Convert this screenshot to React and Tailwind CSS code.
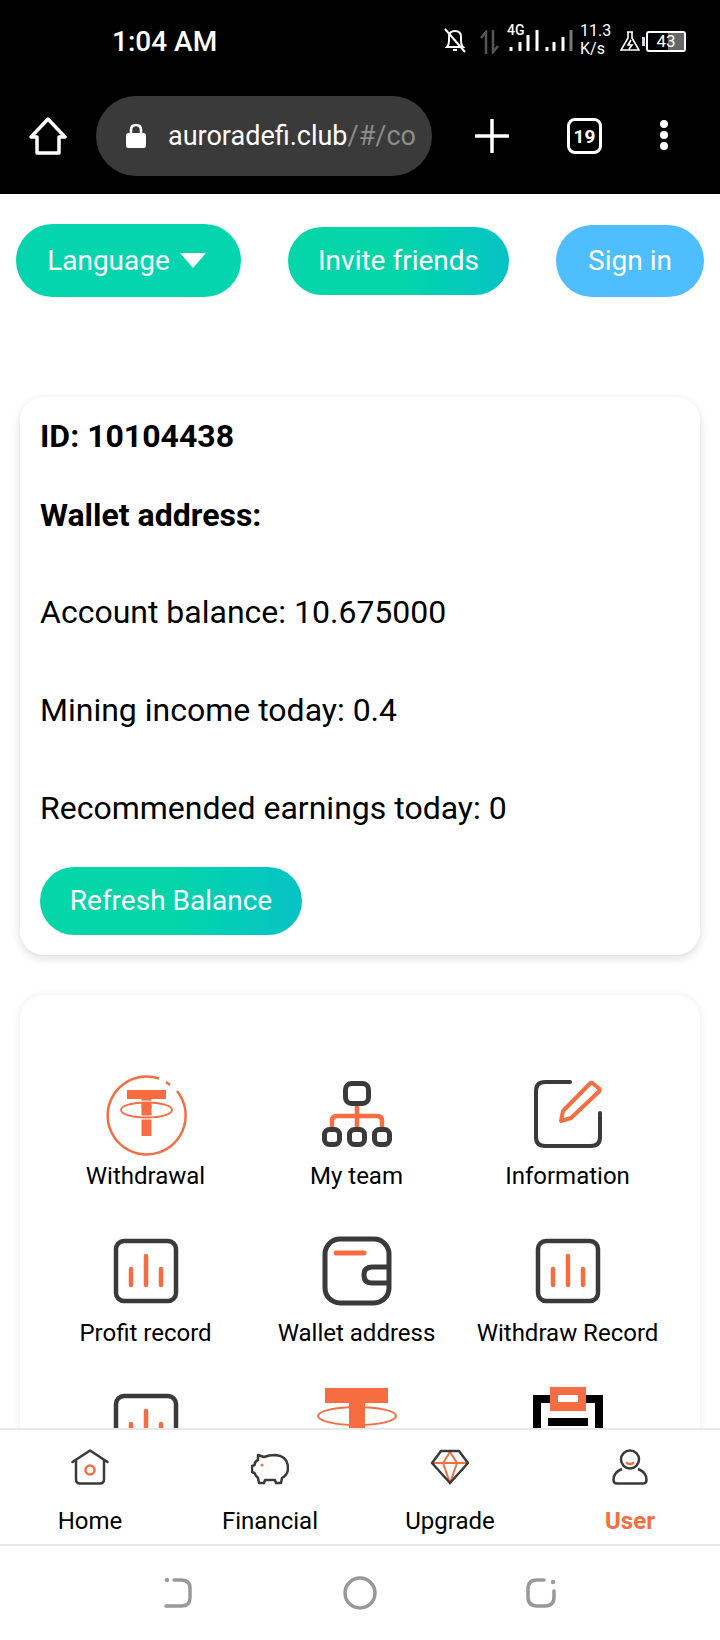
import React from "react";

const ORANGE = "#f56d40";
const DARK = "#3a3a3a";

function WithdrawalIcon() {
  return (
    <svg width="84" height="84" viewBox="0 0 84 84">
      <path d="M55 6.500A39 39 0 1 0 73 19" fill="none" stroke={ORANGE} strokeWidth="2.500" />
      <path d="M62 10l4 3" fill="none" stroke={ORANGE} strokeWidth="2.500" />
      <path d="M23 18H62V27H47.500V64H37.500V27H23Z" fill={ORANGE} />
      <ellipse cx="42.500" cy="38" rx="25.500" ry="7.500" fill="none" stroke="#fff" strokeWidth="4" />
      <ellipse cx="42.500" cy="38" rx="25.500" ry="7.500" fill="none" stroke={ORANGE} strokeWidth="1.800" />
      <path d="M37.500 31H47.500V36H37.500Z" fill={ORANGE} />
    </svg>
  );
}

function TeamIcon() {
  return (
    <svg width="72" height="68" viewBox="0 0 72 68">
      <path d="M36 26V47M11 47V41Q11 36 16 36H56Q61 36 61 41V47" fill="none" stroke={ORANGE} strokeWidth="4.500" />
      <rect x="24.500" y="3.500" width="23" height="20" rx="6" fill="none" stroke={DARK} strokeWidth="5" />
      <rect x="3.500" y="49.500" width="15" height="15" rx="5" fill="none" stroke={DARK} strokeWidth="5" />
      <rect x="28.500" y="49.500" width="15" height="15" rx="5" fill="none" stroke={DARK} strokeWidth="5" />
      <rect x="53.500" y="49.500" width="15" height="15" rx="5" fill="none" stroke={DARK} strokeWidth="5" />
    </svg>
  );
}

function InfoIcon() {
  return (
    <svg width="72" height="72" viewBox="0 0 72 72">
      <path d="M38 4H13Q4 4 4 13V59Q4 68 13 68H59Q68 68 68 59V35" fill="none" stroke={DARK} strokeWidth="4" strokeLinecap="round" />
      <path d="M29 43L31 33L58 5.500Q59.500 4 61 5.500L67 10.500Q68.500 12 67 13.500L39 40Z" fill="none" stroke={ORANGE} strokeWidth="4" strokeLinejoin="round" />
    </svg>
  );
}

function BarsIcon() {
  return (
    <svg width="66" height="66" viewBox="0 0 66 66">
      <rect x="3" y="3" width="60" height="60" rx="8" fill="none" stroke={DARK} strokeWidth="4.500" />
      <path d="M18 31V47M33 18V47M48 31V47" fill="none" stroke={ORANGE} strokeWidth="4.500" strokeLinecap="round" />
    </svg>
  );
}

function WalletIcon() {
  return (
    <svg width="72" height="70" viewBox="0 0 72 70">
      <rect x="4" y="3" width="64" height="64" rx="15" fill="none" stroke={DARK} strokeWidth="5" />
      <path d="M15 17H43" fill="none" stroke={ORANGE} strokeWidth="5" strokeLinecap="round" />
      <path d="M68 31H51Q43 31 43 39Q43 47 51 47H68" fill="none" stroke={DARK} strokeWidth="5" />
    </svg>
  );
}

function TetherIcon() {
  return (
    <svg width="84" height="80" viewBox="0 0 84 80">
      <path d="M10 2H73V17H50V80H34V17H10Z" fill={ORANGE} />
      <ellipse cx="42" cy="30" rx="39" ry="9" fill="none" stroke={ORANGE} strokeWidth="2" />
    </svg>
  );
}

function PrinterIcon() {
  return (
    <svg width="72" height="80" viewBox="0 0 72 80">
      <path d="M20 13H5V78H67V13H52" fill="none" stroke="#000" strokeWidth="8" />
      <rect x="18" y="1" width="36" height="24" fill={ORANGE} />
      <rect x="26" y="9" width="20" height="7" fill="#fff" />
      <rect x="16" y="32" width="40" height="8" fill="#000" />
    </svg>
  );
}

const items = [
  { id: "withdrawal", label: "Withdrawal", icon: <WithdrawalIcon /> },
  { id: "team", label: "My team", icon: <TeamIcon /> },
  { id: "info", label: "Information", icon: <InfoIcon /> },
  { id: "profit", label: "Profit record", icon: <BarsIcon /> },
  { id: "wallet", label: "Wallet address", icon: <WalletIcon /> },
  { id: "record", label: "Withdraw Record", icon: <BarsIcon /> },
  // last row runs under the tab bar, labels are out of view
  { id: "bars", icon: <BarsIcon /> },
  { id: "tether", icon: <TetherIcon /> },
  { id: "printer", icon: <PrinterIcon /> },
];

const tabs = [
  {
    label: "Home",
    icon: (
      <svg width="38" height="36" viewBox="0 0 38 36">
        <path d="M1.500 13L19 1.500L36.500 13M5 11V30Q5 34.500 9 34.500H29Q33 34.500 33 30V11" fill="none" stroke={DARK} strokeWidth="2.500" strokeLinecap="round" strokeLinejoin="round" />
        <circle cx="19" cy="21" r="4.500" fill="none" stroke={ORANGE} strokeWidth="2.500" />
      </svg>
    ),
  },
  {
    label: "Financial",
    icon: (
      <svg width="38" height="32" viewBox="0 0 38 32">
        <path d="M7 2L13 4Q18 2 24 2Q37 3 37 15Q37 22 31 25L30 30H25L24 27H14L13 30H8L7 25Q4 22 3.500 20L1 19V13L3.500 12Q4 8 7 7Z" fill="none" stroke={DARK} strokeWidth="2.500" strokeLinejoin="round" />
        <circle cx="11" cy="12" r="1.500" fill={ORANGE} />
      </svg>
    ),
  },
  {
    label: "Upgrade",
    icon: (
      <svg width="40" height="36" viewBox="0 0 40 36">
        <path d="M2 14H38M13 14L20 3L27 14L20 34L13 14Z" fill="none" stroke={ORANGE} strokeWidth="2" />
        <path d="M11 2H29L38 14L20 34L2 14Z" fill="none" stroke={DARK} strokeWidth="2.500" strokeLinejoin="round" />
      </svg>
    ),
  },
  {
    label: "User",
    active: true,
    icon: (
      <svg width="36" height="36" viewBox="0 0 36 36">
        <circle cx="18" cy="10.500" r="9" fill="none" stroke={DARK} strokeWidth="2.500" />
        <path d="M14 13.500Q18 16.500 22 13.500" fill="none" stroke={ORANGE} strokeWidth="2.500" />
        <path d="M10 20Q1.500 23 1.500 31Q1.500 34.500 5 34.500H31Q34.500 34.500 34.500 31Q34.500 23 26 20" fill="none" stroke={DARK} strokeWidth="2.500" />
      </svg>
    ),
  },
];

function StatusBar() {
  return (
    <div className="flex h-[82px] text-white">
      <span className="ml-[112px] mt-[25px] text-[28px] leading-[34px] font-medium">1:04 AM</span>
      <div className="ml-auto mr-[34px] mt-[25px] flex items-start">
        <svg width="24" height="28" viewBox="0 0 24 28" className="mt-[2px]">
          <path d="M4 20Q6 18 6 14V10Q6 4 12 4Q18 4 18 10V14Q18 18 20 20ZM10 23H14" fill="none" stroke="#fff" strokeWidth="2" />
          <path d="M2 2L22 25" stroke="#fff" strokeWidth="2" />
        </svg>
        <svg width="20" height="24" viewBox="0 0 20 24" className="ml-[13px] mt-[5px]">
          <path d="M6 24V2L1 8M13 0V22L18 16" fill="none" stroke="#555" strokeWidth="2.500" />
        </svg>
        <div className="relative ml-[7px] w-[66px] h-[28px]">
          <span className="absolute left-0 -top-[1px] text-[14px] leading-[13px] font-medium">4G</span>
          <svg width="66" height="24" viewBox="0 0 66 24" className="absolute left-0 top-[4px]">
            <path d="M4 18V22M13 13V22M21 6V22M30 1V22M40 18V22M47 13V22M56 8V22" stroke="#fff" strokeWidth="3" />
            <path d="M64 1V22" stroke="#777" strokeWidth="3" />
          </svg>
        </div>
        <div className="-mt-[3px] ml-[7px] flex w-[36px] flex-col items-start text-[16px] leading-[18px]">
          <span>11.3</span>
          <span>K/s</span>
        </div>
        <svg width="20" height="20" viewBox="0 0 20 20" className="ml-[4px] mt-[6px]">
          <path d="M7 1H13M8 1V7L1 19H19L12 7V1M11 9L8 14H12L9 18" fill="none" stroke="#fff" strokeWidth="1.600" />
        </svg>
        <div className="ml-[2px] mt-[12px] w-[3px] h-[9px] bg-gray-300" />
        <div className="relative ml-[1px] mt-[6px] flex h-[21px] w-[40px] items-center justify-center overflow-hidden rounded-[3px] border-2 border-white text-[17px] leading-none">
          <div className="absolute inset-y-0 right-0 w-[16px] bg-[#666]" />
          <span className="relative">43</span>
        </div>
      </div>
    </div>
  );
}

function BrowserBar() {
  return (
    <div className="flex h-[112px] items-start pt-[14px] text-white">
      <svg width="38" height="38" viewBox="0 0 38 38" className="ml-[29px] mt-[21px]">
        <path d="M19 2L36 20H30V36H8V20H2Z" fill="none" stroke="#fff" strokeWidth="3.500" strokeLinejoin="round" />
      </svg>
      <div className="ml-[29px] flex h-[80px] w-[336px] items-center overflow-hidden rounded-[40px] bg-[#3a3a3a]">
        <svg width="22" height="26" viewBox="0 0 22 26" className="ml-[29px] shrink-0">
          <path d="M6 11V7Q6 2 11 2Q16 2 16 7V11" fill="none" stroke="#fff" strokeWidth="2.500" />
          <rect x="1" y="10" width="20" height="15" rx="2.500" fill="#fff" />
        </svg>
        <span className="ml-[21px] whitespace-nowrap text-[27px]">
          auroradefi.club<span className="text-[#8c8c8c]">/#/co</span>
        </span>
      </div>
      <svg width="34" height="34" viewBox="0 0 34 34" className="ml-[43px] mt-[23px]">
        <path d="M17 1V33M1 17H33" stroke="#fff" strokeWidth="3.500" strokeLinecap="round" />
      </svg>
      <div className="ml-[58px] mt-[22px] flex h-[36px] w-[35px] items-center justify-center rounded-[8px] border-[3.500px] border-white text-[19px] font-bold leading-none">
        19
      </div>
      <div className="ml-[58px] mt-[24px] flex flex-col gap-[3px]">
        <div className="size-[8px] rounded-full bg-white" />
        <div className="size-[8px] rounded-full bg-white" />
        <div className="size-[8px] rounded-full bg-white" />
      </div>
    </div>
  );
}

function TopButtons() {
  return (
    <div className="flex h-[73px] items-center justify-between text-[28px] text-white">
      <button className="flex h-[73px] w-[225px] items-center justify-center gap-[10px] rounded-full bg-[#04d5ae] pr-[4px]">
        Language
        <span className="h-0 w-0 border-x-[13px] border-t-[15px] border-x-transparent border-t-white" />
      </button>
      <button className="h-[68px] w-[221px] rounded-full bg-linear-to-r from-[#04d6a9] from-50% to-[#08c2c6]">
        Invite friends
      </button>
      <button className="h-[72px] w-[148px] rounded-full bg-[#4fbeff]">Sign in</button>
    </div>
  );
}

function AccountCard() {
  return (
    <div className="mx-[20px] mt-[100px] rounded-[24px] bg-white px-[20px] pb-[20px] pt-[19px] text-[32px] leading-[40px] text-black shadow-[0_3px_10px_rgba(0,0,0,0.14)]">
      <p className="font-bold">ID: 10104438</p>
      <p className="mt-[39px] font-bold">Wallet address:</p>
      <p className="mt-[57px]">Account balance: 10.675000</p>
      <p className="mt-[58px]">Mining income today: 0.4</p>
      <p className="mt-[58px]">Recommended earnings today: 0</p>
      <button className="mt-[39px] block h-[68px] w-[262px] rounded-full bg-linear-to-r from-[#04d6a9] from-50% to-[#08c2c6] text-[28px] text-white">
        Refresh Balance
      </button>
    </div>
  );
}

function MenuCard() {
  return (
    <div className="mx-[20px] mt-[40px] rounded-[24px] bg-white pl-[20px] pr-[27px] pt-[75px] shadow-[0_0_8px_rgba(0,0,0,0.08)]">
      <div className="grid grid-cols-3 grid-rows-[157px_155px_155px]">
        {items.map((item) => (
          <div key={item.id} className="flex flex-col items-center">
            <div className="flex h-[88px] items-center justify-center">{item.icon}</div>
            {item.label && <span className="text-[24px] leading-[37px] text-black">{item.label}</span>}
          </div>
        ))}
      </div>
    </div>
  );
}

function TabBar() {
  return (
    <div className="z-10 grid h-[118px] shrink-0 grid-cols-4 border-y-2 border-[#e8e8e8] bg-white">
      {tabs.map((tab) => (
        <div key={tab.label} className="flex flex-col items-center">
          <div className="flex h-[57px] w-full items-end justify-center pb-[2px]">{tab.icon}</div>
          <span className={tab.active ? "mt-[16px] text-[24px] font-bold leading-[36px] text-[#f56d40]" : "mt-[16px] text-[24px] leading-[36px] text-black"}>
            {tab.label}
          </span>
        </div>
      ))}
    </div>
  );
}

function SystemNav() {
  return (
    <div className="flex h-[94px] shrink-0 items-center justify-center bg-white">
      <svg width="30" height="32" viewBox="0 0 30 32">
        <path d="M11 3H18Q27 3 27 11V21Q27 29 18 29H3" fill="none" stroke="#999" strokeWidth="3.500" strokeLinecap="round" />
        <circle cx="4" cy="3" r="2.200" fill="#999" />
      </svg>
      <svg width="34" height="34" viewBox="0 0 34 34" className="ml-[150px]">
        <circle cx="17" cy="17" r="15" fill="none" stroke="#999" strokeWidth="3.500" />
      </svg>
      <svg width="32" height="32" viewBox="0 0 32 32" className="ml-[148px]">
        <path d="M19 3H12Q3 3 3 12V20Q3 29 12 29H20Q29 29 29 20V14" fill="none" stroke="#999" strokeWidth="3.500" strokeLinecap="round" />
        <circle cx="28" cy="5" r="2.200" fill="#999" />
      </svg>
    </div>
  );
}

export default function App() {
  return (
    <div className="flex h-[1640px] w-[720px] flex-col overflow-hidden bg-white font-[Roboto,sans-serif]">
      <div className="h-[194px] shrink-0 bg-black">
        <StatusBar />
        <BrowserBar />
      </div>
      <div className="min-h-0 flex-1 overflow-hidden px-[16px] pt-[30px]">
        <TopButtons />
        <div className="-mx-[16px]">
          <AccountCard />
          <MenuCard />
        </div>
      </div>
      <TabBar />
      <SystemNav />
    </div>
  );
}
